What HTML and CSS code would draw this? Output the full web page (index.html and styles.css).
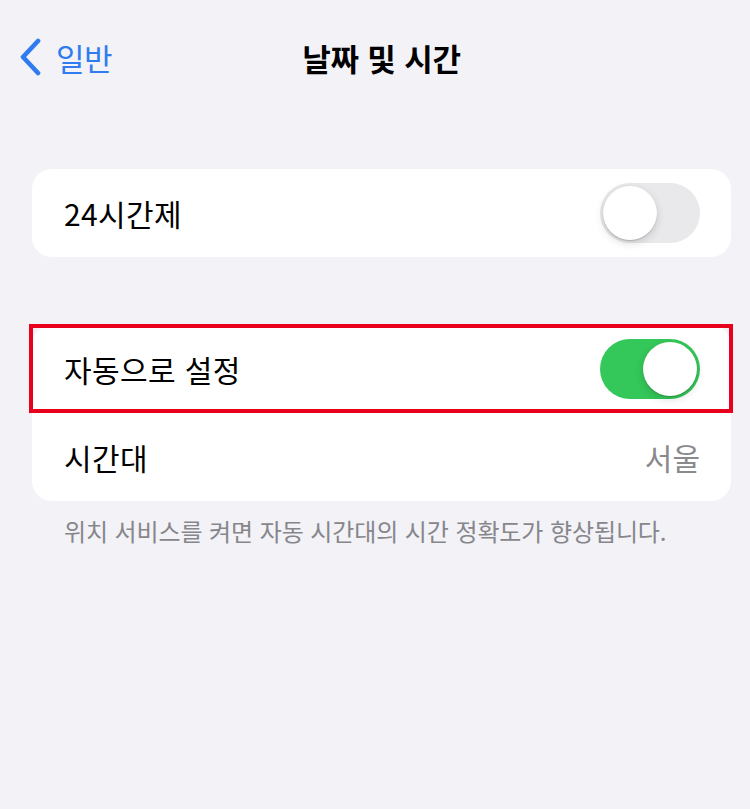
FILE: index.html
```html
<!DOCTYPE html>
<html lang="ko">
<head>
<meta charset="utf-8">
<link rel="stylesheet" href="styles.css">
</head>
<body>
<div class="page">
  <header class="nav">
    <div class="back">
      <svg class="chev" width="24" height="38" viewBox="0 0 24 38"><path d="M20 3 L5 19 L20 35" fill="none" stroke="#2f7bf0" stroke-width="4.6" stroke-linecap="round" stroke-linejoin="round"/></svg>
      <span class="back-label">일반</span>
    </div>
    <div class="title">날짜 및 시간</div>
  </header>

  <section class="card card-first">
    <div class="row">
      <span class="label">24시간제</span>
      <span class="toggle off"><span class="knob"></span></span>
    </div>
  </section>

  <section class="card">
    <div class="row highlighted">
      <span class="label">자동으로 설정</span>
      <span class="toggle on"><span class="knob"></span></span>
    </div>
    <div class="row">
      <span class="label">시간대</span>
      <span class="value">서울</span>
    </div>
  </section>
  <p class="footnote">위치 서비스를 켜면 자동 시간대의 시간 정확도가 향상됩니다.</p>
</div>
</body>
</html>
```

FILE: styles.css
```css
html, body {
  margin: 0;
  padding: 0;
  background: #f2f2f7;
}
body {
  font-family: "Noto Sans CJK KR", "Noto Sans", sans-serif;
  color: #000;
  width: 750px;
  height: 809px;
  overflow: hidden;
}
.page {
  padding: 0 19px 0 32px;
}
.nav {
  position: relative;
  height: 114px;
  display: flex;
  align-items: center;
  justify-content: center;
}
.back {
  position: absolute;
  left: -14px;
  top: 0;
  height: 114px;
  display: flex;
  align-items: center;
  gap: 14px;
}
.chev { display: block; }
.back-label {
  color: #2f7bf0;
  font-size: 31px;
  letter-spacing: -0.5px;
}
.title {
  font-size: 31px;
  font-weight: 700;
  letter-spacing: -0.2px;
}
.card {
  background: #fff;
  border-radius: 20px;
  margin-top: 68px;
}
.card-first {
  margin-top: 55px;
}
.row {
  position: relative;
  height: 88px;
  display: flex;
  align-items: center;
  justify-content: space-between;
  padding: 0 31px 0 32px;
}
.row.highlighted::after {
  content: "";
  position: absolute;
  left: -3px;
  right: -2px;
  top: -1px;
  bottom: 0;
  border: 4px solid #e8001c;
}
.label {
  font-size: 30px;
  letter-spacing: 0.4px;
}
.value {
  font-size: 30px;
  color: #8a8a8e;
  letter-spacing: 0;
}
.toggle {
  width: 100px;
  height: 60px;
  border-radius: 30px;
  display: flex;
  align-items: center;
  box-sizing: border-box;
  padding: 3px;
}
.toggle.off {
  background: #e9e9eb;
  justify-content: flex-start;
}
.toggle.on {
  background: #34c759;
  justify-content: flex-end;
}
.knob {
  width: 54px;
  height: 54px;
  border-radius: 50%;
  background: #fff;
  box-shadow: 0 3px 8px rgba(0,0,0,0.15), 0 1px 1px rgba(0,0,0,0.16);
}
.footnote {
  margin: 12px 0 0 32px;
  font-size: 24px;
  color: #86868b;
  letter-spacing: -0.1px;
}
```
